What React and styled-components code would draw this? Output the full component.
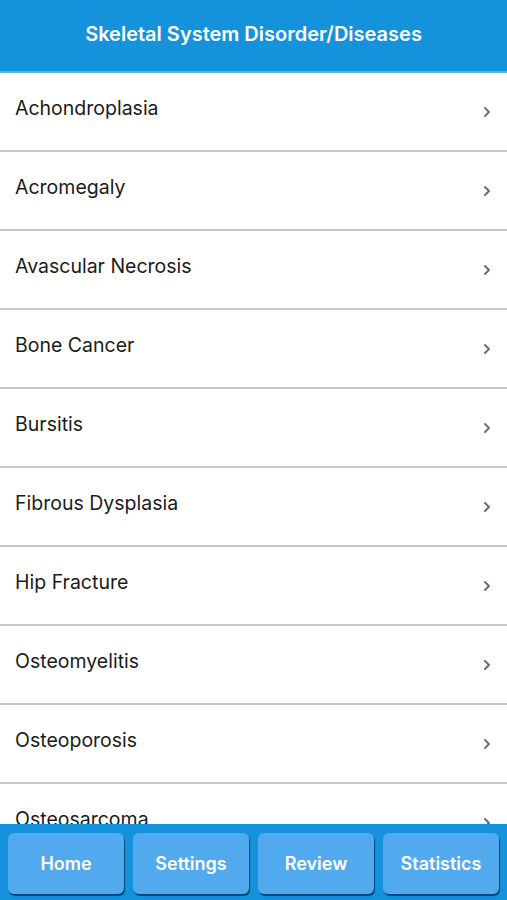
import React from 'react'
import styled, { createGlobalStyle } from 'styled-components'

const GlobalStyle = createGlobalStyle`
  html, body {
    margin: 0;
    padding: 0;
    background: #ffffff;
    font-family: Inter, "Liberation Sans", Arial, sans-serif;
  }
`

const Screen = styled.div`
  height: 900px;
  display: flex;
  flex-direction: column;
  overflow: hidden;
`

const Header = styled.div`
  height: 73px;
  flex-shrink: 0;
  background: #1592dc;
  border-bottom: 2px solid #5db4ea;
  display: flex;
  align-items: center;
  justify-content: center;
  color: #ffffff;
  font-size: 20px;
  font-weight: 600;
  padding-bottom: 4px;
  box-sizing: border-box;
`

const List = styled.ul`
  flex: 1;
  margin: 0;
  padding: 0;
  list-style: none;
  overflow: hidden;
`

const Row = styled.li`
  height: 79px;
  box-sizing: border-box;
  border-bottom: 2px solid #c8c8c8;
  display: flex;
  align-items: center;
  justify-content: space-between;
  padding: 0 16px 8px 15px;
  color: #1b1b1b;
  font-size: 19.5px;
`

const Chevron = styled.svg`
  width: 8px;
  height: 12px;
  margin-top: 8px;
`

const Footer = styled.div`
  height: 76px;
  flex-shrink: 0;
  background: #1592dc;
  display: grid;
  grid-template-columns: repeat(4, 1fr);
  gap: 9px;
  padding: 9px 8px 6px 8px;
  box-sizing: border-box;
`

const TabButton = styled.button`
  border: none;
  border-radius: 6px;
  background: #52aaee;
  color: #ffffff;
  font-family: Inter, "Liberation Sans", Arial, sans-serif;
  font-size: 18px;
  font-weight: 600;
  box-shadow: 1px 2px 1px rgba(0, 40, 80, 0.75);
  cursor: pointer;
`

const items = [
  'Achondroplasia',
  'Acromegaly',
  'Avascular Necrosis',
  'Bone Cancer',
  'Bursitis',
  'Fibrous Dysplasia',
  'Hip Fracture',
  'Osteomyelitis',
  'Osteoporosis',
  'Osteosarcoma',
]

const App = () => {
  return (
    <>
      <GlobalStyle />
      <Screen>
        <Header>Skeletal System Disorder/Diseases</Header>
        <List>
          {items.map((name) => (
            <Row key={name}>
              {name}
              <Chevron viewBox="0 0 8 12">
                <path d="M2 2l4 4-4 4" fill="none" stroke="#6e6e6e" strokeWidth="2" strokeLinecap="round" strokeLinejoin="round" />
              </Chevron>
            </Row>
          ))}
        </List>
        <Footer>
          <TabButton>Home</TabButton>
          <TabButton>Settings</TabButton>
          <TabButton>Review</TabButton>
          <TabButton>Statistics</TabButton>
        </Footer>
      </Screen>
    </>
  )
}

export default App
